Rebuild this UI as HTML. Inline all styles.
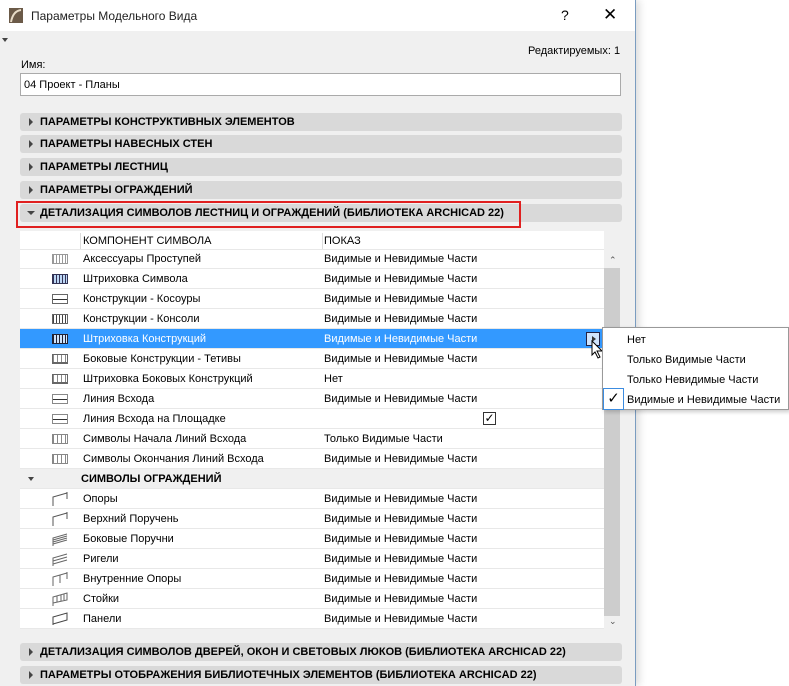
<!DOCTYPE html>
<html><head><meta charset="utf-8"><style>
*{box-sizing:border-box;margin:0;padding:0}
body{width:789px;height:686px;background:#fff;position:relative;overflow:hidden;font-family:"Liberation Sans",sans-serif;font-size:11px;color:#000}
.win{position:absolute;left:0;top:0;width:636px;height:686px;background:#f0f0f0;border-right:1px solid #7a9cc0;box-shadow:3px 0 8px rgba(0,0,0,.15)}
.title{position:absolute;left:0;top:0;width:635px;height:31px;background:#fff}
.a{position:absolute;white-space:nowrap}
.bar{position:absolute;left:20px;width:602px;height:18px;background:#d9d9d9;border-radius:3px;font-weight:bold;font-size:11px;line-height:19px;padding-left:20px}
.bar:before{content:"";position:absolute;left:9px;top:5px;border-left:4px solid #444;border-top:4px solid transparent;border-bottom:4px solid transparent}
.bar.open:before{left:7px;top:7px;border-top:4px solid #444;border-left:4px solid transparent;border-right:4px solid transparent;border-bottom:0}
.tbl{position:absolute;left:20px;top:231px;width:584px;height:398px;background:#fff}
.row{position:absolute;left:0;width:584px;height:20px;border-bottom:1px solid #e8e8e8;line-height:21px}
.row .n{position:absolute;left:63px}
.row .v{position:absolute;left:304px}
.row .i{position:absolute;left:32px;top:5px;width:16px;height:10px;border:1px solid #666}
.sel{background:#3399ff;color:#fff}
.menu div{position:absolute;left:24px}
</style></head><body>
<div class="win">
<div class="title">
<svg class="a" style="left:9px;top:8px" width="14" height="15"><rect width="14" height="15" fill="#6b5a48"/><path d="M2 14 Q4 3 12 2" stroke="#e8dcc8" stroke-width="2" fill="none"/></svg>
<div class="a" style="left:31px;top:9px;font-size:12px;color:#222">Параметры Модельного Вида</div>
<div class="a" style="left:561px;top:7px;font-size:14px">?</div>
<div class="a" style="left:603px;top:5px;font-size:17px;font-weight:300">✕</div>
</div>
<div class="a" style="left:2px;top:38px;border-top:4px solid #444;border-left:3px solid transparent;border-right:3px solid transparent"></div>
<div class="a" style="left:528px;top:45px">Редактируемых: 1</div>
<div class="a" style="left:21px;top:59px">Имя:</div>
<div class="a" style="left:20px;top:73px;width:601px;height:23px;background:#fff;border:1px solid #aaa;padding:5px 3px">04 Проект - Планы</div>
<div class="bar" style="top:113px">ПАРАМЕТРЫ КОНСТРУКТИВНЫХ ЭЛЕМЕНТОВ</div>
<div class="bar" style="top:135px">ПАРАМЕТРЫ НАВЕСНЫХ СТЕН</div>
<div class="bar" style="top:158px">ПАРАМЕТРЫ ЛЕСТНИЦ</div>
<div class="bar" style="top:181px">ПАРАМЕТРЫ ОГРАЖДЕНИЙ</div>
<div class="bar open" style="top:204px">ДЕТАЛИЗАЦИЯ СИМВОЛОВ ЛЕСТНИЦ И ОГРАЖДЕНИЙ (БИБЛИОТЕКА ARCHICAD 22)</div>
<div class="a" style="left:16px;top:201px;width:505px;height:27px;border:2px solid #e02020"></div>
<div class="tbl">
<div class="row" style="top:0;height:19px"><span style="position:absolute;left:60px;top:2px;height:16px;border-left:1px solid #ddd"></span><span class="n">КОМПОНЕНТ СИМВОЛА</span><span style="position:absolute;left:302px;top:2px;height:16px;border-left:1px solid #ddd"></span><span class="v">ПОКАЗ</span></div>
<div class="row" style="top:18px"><span class="i" style="border-color:#999;background:repeating-linear-gradient(90deg,#999 0 1px,#fff 1px 3px)"></span><span class="n">Аксессуары Проступей</span><span class="v">Видимые и Невидимые Части</span></div>
<div class="row" style="top:38px"><span class="i" style="border-color:#335;background:repeating-linear-gradient(90deg,#335 0 1px,#bcd6f5 1px 3px)"></span><span class="n">Штриховка Символа</span><span class="v">Видимые и Невидимые Части</span></div>
<div class="row" style="top:58px"><span class="i" style="background:linear-gradient(#fff 4px,#333 4px 5px,#fff 5px),repeating-linear-gradient(90deg,#666 0 1px,#fff 1px 4px)"></span><span class="n">Конструкции - Косоуры</span><span class="v">Видимые и Невидимые Части</span></div>
<div class="row" style="top:78px"><span class="i" style="background:repeating-linear-gradient(90deg,#444 0 1px,#fff 1px 3px)"></span><span class="n">Конструкции - Консоли</span><span class="v">Видимые и Невидимые Части</span></div>
<div class="row sel" style="top:98px"><span class="i" style="border-color:#223;background:repeating-linear-gradient(90deg,#223 0 1px,#cfe3fb 1px 3px)"></span><span class="n">Штриховка Конструкций</span><span class="v">Видимые и Невидимые Части</span><span style="position:absolute;left:566px;top:3px;width:14px;height:14px;background:#cfe3fb;border:1px solid #224"></span><span style="position:absolute;left:572px;top:7px;border-left:4px solid #333;border-top:3px solid transparent;border-bottom:3px solid transparent"></span></div>
<div class="row" style="top:118px"><span class="i" style="border-bottom-width:2px;background:repeating-linear-gradient(90deg,#888 0 1px,#fff 1px 4px)"></span><span class="n">Боковые Конструкции - Тетивы</span><span class="v">Видимые и Невидимые Части</span></div>
<div class="row" style="top:138px"><span class="i" style="border-bottom-width:2px;background:repeating-linear-gradient(90deg,#888 0 1px,#fff 1px 4px)"></span><span class="n">Штриховка Боковых Конструкций</span><span class="v">Нет</span></div>
<div class="row" style="top:158px"><span class="i" style="border-color:#888;background:linear-gradient(#fff 4px,#333 4px 5px,#fff 5px),repeating-linear-gradient(90deg,#888 0 1px,#fff 1px 4px)"></span><span class="n">Линия Всхода</span><span class="v">Видимые и Невидимые Части</span></div>
<div class="row" style="top:178px"><span class="i" style="border-color:#888;background:linear-gradient(#fff 4px,#333 4px 5px,#fff 5px)"></span><span class="n">Линия Всхода на Площадке</span><span style="position:absolute;left:463px;top:3px;width:13px;height:13px;border:1px solid #333;font-size:12px;line-height:11px;text-align:center">✓</span></div>
<div class="row" style="top:198px"><span class="i" style="border-color:#888;background:repeating-linear-gradient(90deg,#888 0 1px,#fff 1px 4px)"></span><span class="n">Символы Начала Линий Всхода</span><span class="v">Только Видимые Части</span></div>
<div class="row" style="top:218px"><span class="i" style="border-color:#888;background:repeating-linear-gradient(90deg,#888 0 1px,#fff 1px 4px)"></span><span class="n">Символы Окончания Линий Всхода</span><span class="v">Видимые и Невидимые Части</span></div>
<div class="row" style="top:238px;background:#f0f0f0;font-weight:bold"><span style="position:absolute;left:8px;top:8px;border-top:4px solid #444;border-left:3px solid transparent;border-right:3px solid transparent"></span><span class="n" style="left:61px">СИМВОЛЫ ОГРАЖДЕНИЙ</span></div>
<div class="row" style="top:258px"><svg class="a" style="left:32px;top:3px" width="18" height="14"><path d="M1 14V5L15 1M15 0V7" stroke="#555" fill="none"/></svg><span class="n">Опоры</span><span class="v">Видимые и Невидимые Части</span></div>
<div class="row" style="top:278px"><svg class="a" style="left:32px;top:3px" width="18" height="14"><path d="M1 14V5L15 1M15 0V7" stroke="#555" fill="none"/></svg><span class="n">Верхний Поручень</span><span class="v">Видимые и Невидимые Части</span></div>
<div class="row" style="top:298px"><svg class="a" style="left:32px;top:3px" width="18" height="14"><path d="M1 14V6L15 2M1 8L15 4M1 10L15 6M1 12L15 8" stroke="#666" fill="none"/></svg><span class="n">Боковые Поручни</span><span class="v">Видимые и Невидимые Части</span></div>
<div class="row" style="top:318px"><svg class="a" style="left:32px;top:3px" width="18" height="14"><path d="M1 14V6L15 2M1 9L15 5M1 12L15 8" stroke="#666" fill="none"/></svg><span class="n">Ригели</span><span class="v">Видимые и Невидимые Части</span></div>
<div class="row" style="top:338px"><svg class="a" style="left:32px;top:3px" width="18" height="14"><path d="M1 14V5L15 1M8 3V11M15 0V7" stroke="#666" fill="none"/></svg><span class="n">Внутренние Опоры</span><span class="v">Видимые и Невидимые Части</span></div>
<div class="row" style="top:358px"><svg class="a" style="left:32px;top:3px" width="18" height="14"><path d="M1 14V5L15 1V8L1 11M5 4V10M9 3V9M12 2V8" stroke="#666" fill="none"/></svg><span class="n">Стойки</span><span class="v">Видимые и Невидимые Части</span></div>
<div class="row" style="top:378px"><svg class="a" style="left:32px;top:3px" width="18" height="14"><path d="M1 13V5L15 1V8L1 12" stroke="#444" fill="none"/></svg><span class="n">Панели</span><span class="v">Видимые и Невидимые Части</span></div>
</div>
<div class="a" style="left:604px;top:231px;width:18px;height:398px;background:#f0f0f0"></div>
<div class="a" style="left:604px;top:268px;width:16px;height:348px;background:#cdcdcd"></div>
<div class="a" style="left:609px;top:255px;font-size:9px;color:#555">⌃</div>
<div class="a" style="left:609px;top:616px;font-size:9px;color:#555">⌄</div>
<div class="bar" style="top:643px">ДЕТАЛИЗАЦИЯ СИМВОЛОВ ДВЕРЕЙ, ОКОН И СВЕТОВЫХ ЛЮКОВ (БИБЛИОТЕКА ARCHICAD 22)</div>
<div class="bar" style="top:666px">ПАРАМЕТРЫ ОТОБРАЖЕНИЯ БИБЛИОТЕЧНЫХ ЭЛЕМЕНТОВ (БИБЛИОТЕКА ARCHICAD 22)</div>
</div>
<svg class="a" style="left:591px;top:340px" width="14" height="20"><path d="M1 1V15L4 12L7 18L9 17L6 11H11Z" fill="#fff" stroke="#000"/></svg>
<div class="a menu" style="left:602px;top:327px;width:187px;height:83px;background:#fff;border:1px solid #999;box-shadow:2px 2px 4px rgba(0,0,0,.2)">
<div style="top:6px">Нет</div>
<div style="top:26px">Только Видимые Части</div>
<div style="top:46px">Только Невидимые Части</div>
<div style="top:66px">Видимые и Невидимые Части</div>
<span style="position:absolute;left:0;top:60px;width:21px;height:22px;border:1px solid #3c8ce0;font-size:15px;line-height:19px;text-align:center">✓</span>
</div>
</body></html>
